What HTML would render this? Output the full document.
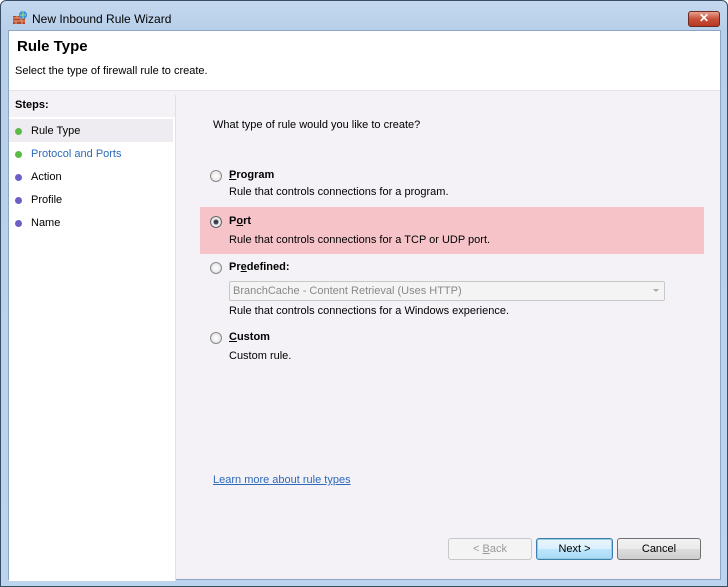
<!DOCTYPE html>
<html><head><style>
*{margin:0;padding:0;box-sizing:border-box}
body{width:728px;height:587px;overflow:hidden;font-family:"Liberation Sans",sans-serif;font-size:11px;color:#000;background:#fff}
.win{position:absolute;left:0;top:0;width:728px;height:587px;border:1px solid #3a4d66;border-radius:6px 6px 0 0;background:linear-gradient(#c4d8ee,#b7cfe9 30px,#bcd4ee);}
.a{position:absolute}
.client{left:7px;top:29px;width:713px;height:550px;background:#f4f2f7;border:1px solid #8ea6c4}
</style></head><body>
<div class="win">
<div class="a" style="left:11px;top:9px;width:16px;height:15px">
<svg width="16" height="15"><rect x="1" y="6" width="12" height="8" fill="#b04a2a"/><path d="M1 8h12M1 11h12M5 6v2M9 8v3M4 11v3M10 11v3" stroke="#e8a080" stroke-width="1"/><circle cx="11" cy="5" r="4" fill="#3a8ee0"/><path d="M8 5h6M11 1v8" stroke="#a0e080"/></svg></div>
<div class="a" style="left:31px;top:11px;font-size:12px">New Inbound Rule Wizard</div>
<div class="a" style="left:687px;top:10px;width:32px;height:16px;border:1px solid #6b2a22;border-radius:3px;background:linear-gradient(#e8a090,#c8503a 50%,#b83822);color:#fff;font-weight:bold;text-align:center;line-height:13px;font-size:12px">✕</div>
<div class="a client">
 <div class="a" style="left:0;top:0;width:711px;height:60px;background:#fff;border-bottom:1px solid #e6e4ea"></div>
 <div class="a" style="left:8px;top:7px;font-size:15px;font-weight:bold">Rule Type</div>
 <div class="a" style="left:6px;top:34px">Select the type of firewall rule to create.</div>
 <div class="a" style="left:0;top:64px;width:167px;height:486px;background:#fff;border-right:1px solid #e2e0e6"></div>
 <div class="a" style="left:0;top:64px;width:166px;height:22px;background:#f4f2f7"></div>
 <div class="a" style="left:6px;top:68px;font-weight:bold">Steps:</div>
 <div class="a" style="left:0;top:88px;width:164px;height:23px;background:#eeecf0"></div>
 <div class="a" style="left:6px;top:97px;width:7px;height:7px;border-radius:50%;background:#5cba48"></div>
 <div class="a" style="left:22px;top:94px">Rule Type</div>
 <div class="a" style="left:6px;top:120px;width:7px;height:7px;border-radius:50%;background:#5cba48"></div>
 <div class="a" style="left:22px;top:117px;color:#2d6ab8">Protocol and Ports</div>
 <div class="a" style="left:6px;top:143px;width:7px;height:7px;border-radius:50%;background:#6a60c8"></div>
 <div class="a" style="left:22px;top:140px">Action</div>
 <div class="a" style="left:6px;top:166px;width:7px;height:7px;border-radius:50%;background:#6a60c8"></div>
 <div class="a" style="left:22px;top:163px">Profile</div>
 <div class="a" style="left:6px;top:189px;width:7px;height:7px;border-radius:50%;background:#6a60c8"></div>
 <div class="a" style="left:22px;top:186px">Name</div>

 <div class="a" style="left:204px;top:88px">What type of rule would you like to create?</div>

 <div class="a" style="left:201px;top:139px;width:12px;height:12px;border-radius:50%;border:1px solid #8a8a8a;background:radial-gradient(#fff,#dcdcdc)"></div>
 <div class="a" style="left:220px;top:138px;font-weight:bold"><u>P</u>rogram</div>
 <div class="a" style="left:220px;top:155px">Rule that controls connections for a program.</div>

 <div class="a" style="left:191px;top:176px;width:504px;height:47px;background:#f6c4c8"></div>
 <div class="a" style="left:201px;top:185px;width:12px;height:12px;border-radius:50%;border:1px solid #666;background:radial-gradient(#334 0,#445 2px,#eee 3px,#ddd)"></div>
 <div class="a" style="left:220px;top:184px;font-weight:bold">P<u>o</u>rt</div>
 <div class="a" style="left:220px;top:203px">Rule that controls connections for a TCP or UDP port.</div>

 <div class="a" style="left:201px;top:231px;width:12px;height:12px;border-radius:50%;border:1px solid #8a8a8a;background:radial-gradient(#fff,#dcdcdc)"></div>
 <div class="a" style="left:220px;top:230px;font-weight:bold">Pr<u>e</u>defined:</div>
 <div class="a" style="left:220px;top:250px;width:436px;height:20px;border:1px solid #c8c8c8;border-radius:2px;background:#f4f4f4;color:#888;padding:3px 3px">BranchCache - Content Retrieval (Uses HTTP)</div>
 <div class="a" style="left:644px;top:258px;width:0;height:0;border-left:3px solid transparent;border-right:3px solid transparent;border-top:3px solid #aaa"></div>
 <div class="a" style="left:220px;top:274px">Rule that controls connections for a Windows experience.</div>

 <div class="a" style="left:201px;top:301px;width:12px;height:12px;border-radius:50%;border:1px solid #8a8a8a;background:radial-gradient(#fff,#dcdcdc)"></div>
 <div class="a" style="left:220px;top:300px;font-weight:bold"><u>C</u>ustom</div>
 <div class="a" style="left:220px;top:319px">Custom rule.</div>

 <div class="a" style="left:204px;top:443px;color:#2d6ab8;text-decoration:underline">Learn more about rule types</div>

 <div class="a" style="left:439px;top:507px;width:84px;height:22px;border:1px solid #c8c8c8;border-radius:3px;background:#f4f4f4;color:#999;text-align:center;line-height:20px">&lt; <u>B</u>ack</div>
 <div class="a" style="left:527px;top:507px;width:77px;height:22px;border:1px solid #3c7fb1;border-radius:3px;background:linear-gradient(#eaf6fd,#d9f0fc 50%,#bee6fd 51%,#a7d9f5);box-shadow:inset 0 0 0 1px #9cd;text-align:center;line-height:20px">Next &gt;</div>
 <div class="a" style="left:608px;top:507px;width:84px;height:22px;border:1px solid #707070;border-radius:3px;background:linear-gradient(#f2f2f2,#ebebeb 50%,#dddddd 51%,#cfcfcf);text-align:center;line-height:20px">Cancel</div>
</div>
</div>
</body></html>
